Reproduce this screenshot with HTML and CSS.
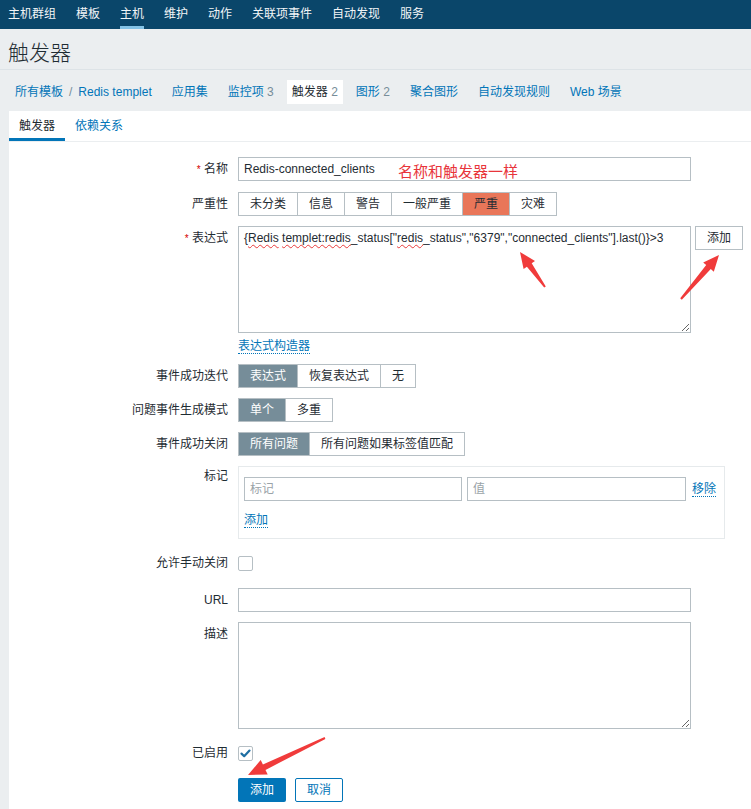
FILE: index.html
```html
<!DOCTYPE html>
<html lang="zh-CN">
<head>
<meta charset="utf-8">
<title>触发器</title>
<link rel="stylesheet" href="styles.css">
</head>
<body>
<nav class="topnav">
  <a class="nav-item">主机群组</a>
  <a class="nav-item">模板</a>
  <a class="nav-item active">主机</a>
  <a class="nav-item">维护</a>
  <a class="nav-item">动作</a>
  <a class="nav-item">关联项事件</a>
  <a class="nav-item">自动发现</a>
  <a class="nav-item">服务</a>
</nav>
<header class="page-header"><h1 class="page-title">触发器</h1></header>
<ul class="breadcrumbs">
  <li class="crumb"><a class="link">所有模板</a><span class="sep">/</span><a class="link">Redis templet</a></li>
  <li class="crumb"><a class="link">应用集</a></li>
  <li class="crumb"><a class="link">监控项</a> <span class="count">3</span></li>
  <li class="crumb selected">触发器 <span class="count">2</span></li>
  <li class="crumb"><a class="link">图形</a> <span class="count">2</span></li>
  <li class="crumb"><a class="link">聚合图形</a></li>
  <li class="crumb"><a class="link">自动发现规则</a></li>
  <li class="crumb"><a class="link">Web 场景</a></li>
</ul>
<main class="panel">
  <div class="tabs">
    <span class="tab active">触发器</span>
    <span class="tab link">依赖关系</span>
  </div>
  <div class="form">
    <div class="lbl"><span class="req">*</span> 名称</div>
    <div class="field note-wrap">
      <div class="input wide">Redis-connected_clients</div>
      <span class="note">名称和触发器一样</span>
    </div>

    <div class="lbl">严重性</div>
    <div class="field">
      <div class="seg">
        <span class="seg-item">未分类</span><span class="seg-item">信息</span><span class="seg-item">警告</span><span class="seg-item">一般严重</span><span class="seg-item high">严重</span><span class="seg-item">灾难</span>
      </div>
    </div>

    <div class="lbl"><span class="req">*</span> 表达式</div>
    <div class="field">
      <div class="expr-row">
        <div class="textarea expr">{<span class="typo">Redis</span> <span class="typo">templet:redis</span>_status["<span class="typo">redis</span>_status","6379","connected_clients"].last()}&gt;3</div>
        <span class="btn-alt">添加</span>
      </div>
      <a class="link dotted builder">表达式构造器</a>
    </div>

    <div class="lbl">事件成功迭代</div>
    <div class="field">
      <div class="seg">
        <span class="seg-item on">表达式</span><span class="seg-item">恢复表达式</span><span class="seg-item">无</span>
      </div>
    </div>

    <div class="lbl">问题事件生成模式</div>
    <div class="field">
      <div class="seg">
        <span class="seg-item on">单个</span><span class="seg-item">多重</span>
      </div>
    </div>

    <div class="lbl">事件成功关闭</div>
    <div class="field">
      <div class="seg">
        <span class="seg-item on">所有问题</span><span class="seg-item">所有问题如果标签值匹配</span>
      </div>
    </div>

    <div class="lbl lbl-top">标记</div>
    <div class="field">
      <div class="tags">
        <div class="tag-row">
          <div class="input tag-input placeholder">标记</div>
          <div class="input tag-input val placeholder">值</div>
          <a class="link dotted">移除</a>
        </div>
        <a class="link dotted tag-add">添加</a>
      </div>
    </div>

    <div class="lbl lbl-check">允许手动关闭</div>
    <div class="field check-field"><span class="checkbox"></span></div>

    <div class="lbl">URL</div>
    <div class="field"><div class="input wide"></div></div>

    <div class="lbl">描述</div>
    <div class="field"><div class="textarea desc"></div></div>

    <div class="lbl lbl-check">已启用</div>
    <div class="field check-field">
      <span class="checkbox checked">
        <svg class="tick" viewBox="0 0 15 15" width="15" height="15"><path d="M3.5 7.6 L6.2 10.2 L11.5 4.6" fill="none" stroke="#1f6fa3" stroke-width="2.2" stroke-linecap="round" stroke-linejoin="round"/></svg>
      </span>
    </div>

    <div class="lbl"></div>
    <div class="field buttons">
      <span class="btn-primary">添加</span><span class="btn-cancel">取消</span>
    </div>
  </div>
</main>
<svg class="annotations" width="751" height="809" viewBox="0 0 751 809">
  <polygon fill="#f03b3b" points="545.8,286.4 531.7,263.3 535.0,260.9 520,252 523.6,269.1 526.9,266.7 544.2,287.6"/>
  <polygon fill="#f03b3b" points="681.8,299.7 710.8,269.1 713.8,271.7 719,255 703.2,262.5 706.2,265.1 680.2,298.3"/>
  <polygon fill="#f03b3b" points="325.4,738.9 265.5,769.9 267.7,774.4 248,775 260.7,760.0 262.9,764.5 324.6,737.1"/>
</svg>
</body>
</html>
```

FILE: styles.css
```css
* { box-sizing: border-box; }

body {
  margin: 0;
  background: #ebeef0;
  font-family: "Liberation Sans", "Noto Sans CJK SC", Arial, sans-serif;
  font-size: 12px;
  line-height: 14px;
  color: #1f2c33;
  position: relative;
}

.topnav {
  height: 29px;
  background: #0a466a;
  display: flex;
  gap: 20px;
  padding-left: 8px;
}
.nav-item {
  color: #f2f5f7;
  line-height: 29px;
  text-decoration: none;
}
.nav-item.active {
  box-shadow: inset 0 -3px 0 #84c3e6;
}

.page-header {
  padding: 13px 0 5px 8px;
  border-bottom: 1px solid #dde3e7;
}
.page-title {
  margin: 0;
  font-size: 21px;
  line-height: 22px;
  font-weight: 300;
  color: #1f2c33;
}

.breadcrumbs {
  list-style: none;
  margin: 10px 0 0 0;
  padding: 0 0 0 5px;
  display: flex;
  height: 24px;
}
.crumb {
  padding: 0 10px;
  line-height: 24px;
}
.crumb.selected {
  background: #ffffff;
  margin: 0 3px;
  padding: 0 5px;
  color: #1f2c33;
}
.sep {
  margin: 0 6px;
  color: #768d99;
}
.count { color: #768d99; }

.link {
  color: #0275b8;
  text-decoration: none;
}
.dotted {
  border-bottom: 1px dotted #0275b8;
}

.panel {
  margin: 7px 0 0 9px;
  background: #ffffff;
  padding-bottom: 20px;
}

.tabs {
  display: flex;
  height: 31px;
  border-bottom: 1px solid #ebeef0;
}
.tab {
  padding: 0 10px;
  line-height: 30px;
}
.tab.active {
  color: #1f2c33;
  box-shadow: inset 0 -3px 0 #0275b8;
}

.form {
  display: grid;
  grid-template-columns: 219px 1fr;
  column-gap: 10px;
  row-gap: 10px;
  padding-top: 15px;
}
.lbl {
  text-align: right;
  line-height: 24px;
  white-space: nowrap;
}
.lbl-top { line-height: 20px; }
.lbl-check { line-height: 29px; }
.req {
  color: #d40000;
  font-size: 10px;
}

.input {
  height: 24px;
  border: 1px solid #b6bfc4;
  background: #fff;
  padding: 0 5px;
  line-height: 22px;
  white-space: nowrap;
  overflow: hidden;
}
.wide { width: 453px; }
.placeholder { color: #9aa3a8; }

.note-wrap { position: relative; }
.note {
  position: absolute;
  left: 160px;
  top: 7px;
  font-size: 15px;
  line-height: 16px;
  color: #e8353b;
}

.seg {
  display: inline-flex;
  height: 24px;
  border: 1px solid #b6bfc4;
  background: #fff;
}
.seg-item {
  padding: 0 11px;
  line-height: 22px;
  border-left: 1px solid #b6bfc4;
  white-space: nowrap;
}
.seg-item:first-child { border-left: none; }
.seg-item.high { background: #e97659; }
.seg-item.on {
  background: #768d99;
  color: #ffffff;
}

.expr-row {
  display: flex;
  align-items: flex-start;
  gap: 4px;
}
.textarea {
  width: 453px;
  height: 107px;
  border: 1px solid #b6bfc4;
  background: #fff;
  padding: 4px 5px;
  line-height: 14px;
  resize: both;
  overflow: auto;
  white-space: nowrap;
}
.typo {
  text-decoration: underline wavy #e83a3a;
  text-decoration-thickness: 1px;
  text-underline-offset: 2px;
}
.btn-alt {
  width: 48px;
  height: 24px;
  border: 1px solid #b6bfc4;
  line-height: 22px;
  text-align: center;
  background: #fff;
}
.builder {
  display: inline-block;
  margin-top: 6px;
  line-height: 14px;
}

.tags {
  width: 487px;
  border: 1px solid #e6eaec;
  padding: 10px 5px;
}
.tag-row {
  display: flex;
  align-items: center;
}
.tag-input { width: 218px; }
.tag-input.val {
  width: 219px;
  margin-left: 5px;
  margin-right: 6px;
}
.tag-add {
  display: inline-block;
  margin-top: 12px;
  line-height: 14px;
}

.check-field {
  padding: 7px 0 7px 0;
}
.checkbox {
  display: block;
  width: 15px;
  height: 15px;
  border: 1px solid #b6bfc4;
  border-radius: 2px;
  background: #fff;
  position: relative;
}
.tick {
  position: absolute;
  left: -1px;
  top: -1px;
}

.buttons {
  display: flex;
  gap: 9px;
}
.btn-primary {
  width: 48px;
  height: 24px;
  background: #0275b8;
  color: #fff;
  border-radius: 2px;
  line-height: 24px;
  text-align: center;
}
.btn-cancel {
  width: 48px;
  height: 24px;
  border: 1px solid #0275b8;
  color: #0275b8;
  border-radius: 2px;
  line-height: 22px;
  text-align: center;
  background: #fff;
}

.annotations {
  position: absolute;
  left: 0;
  top: 0;
  pointer-events: none;
}
```
